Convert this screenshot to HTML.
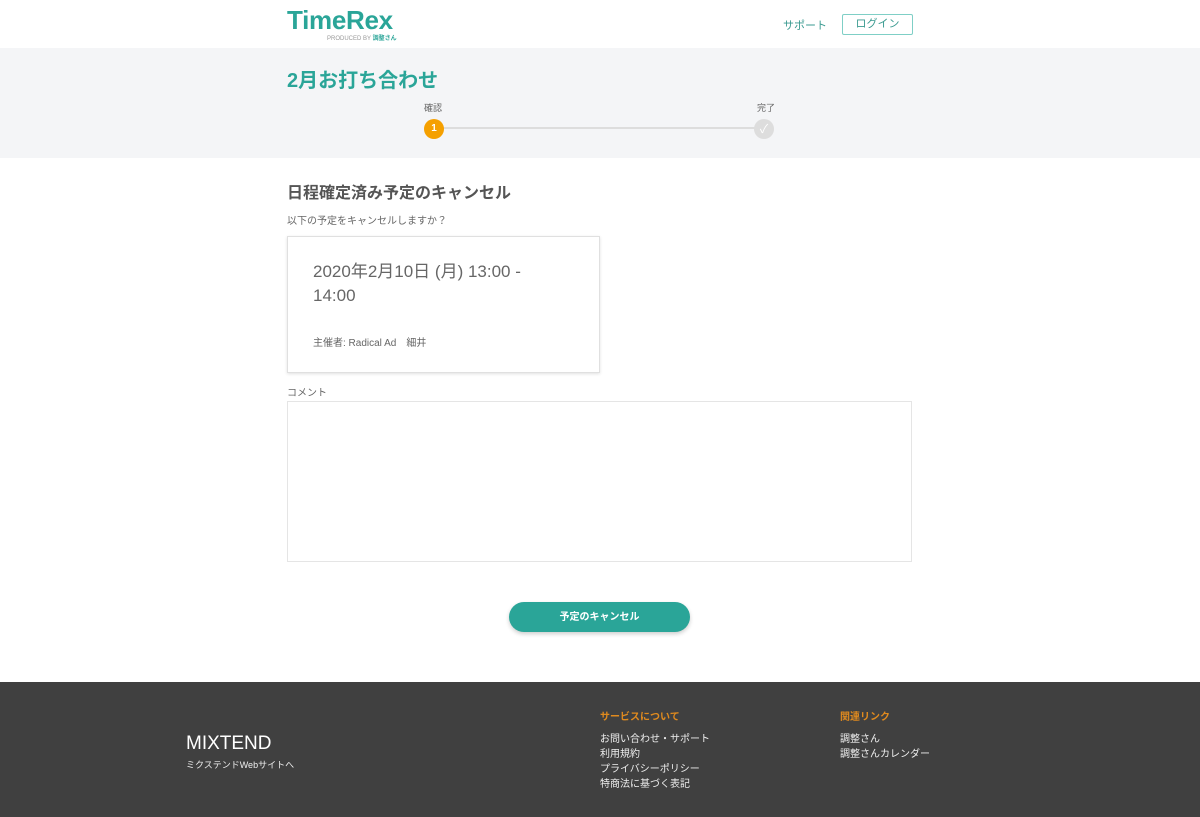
<!DOCTYPE html>
<html><head><meta charset="utf-8"><style>
*{box-sizing:border-box;margin:0;padding:0}
body{width:1200px;height:817px;overflow:hidden;background:#fff;font-family:"Liberation Sans","Noto Sans CJK JP",sans-serif;color:#555;position:relative}
.abs{position:absolute}
</style></head><body>
<div class="abs" style="left:0;top:0;width:1200px;height:48px;background:#fff"></div>
<div class="abs" style="left:287px;top:5px;font-size:26px;font-weight:bold;color:#2aa598;letter-spacing:-0.3px">TimeRex</div>
<div class="abs" style="left:327px;top:33px;font-size:6px;color:#999">PRODUCED BY <b style="color:#2aa598">調整さん</b></div>
<div class="abs" style="left:783px;top:17px;font-size:11px;color:#3a9a90">サポート</div>
<div class="abs" style="left:842px;top:14px;width:71px;height:21px;border:1.5px solid #7fcfc6;border-radius:2px;font-size:11px;color:#3a9a90;text-align:center;line-height:19px">ログイン</div>
<div class="abs" style="left:0;top:48px;width:1200px;height:110px;background:#f4f5f7"></div>
<div class="abs" style="left:287px;top:64px;font-size:20px;font-weight:bold;color:#2aa598">2月お打ち合わせ</div>
<div class="abs" style="left:424px;top:101px;font-size:9px;color:#666">確認</div>
<div class="abs" style="left:757px;top:101px;font-size:9px;color:#666">完了</div>
<div class="abs" style="left:440px;top:127px;width:325px;height:2px;background:#ddd"></div>
<div class="abs" style="left:424px;top:119px;width:20px;height:20px;border-radius:50%;background:#f5a000;color:#fff;font-size:10px;font-weight:bold;text-align:center;line-height:20px">1</div>
<div class="abs" style="left:754px;top:119px;width:20px;height:20px;border-radius:50%;background:#ddd;color:#fff;font-size:12px;text-align:center;line-height:20px">✓</div>
<div class="abs" style="left:287px;top:179px;font-size:16px;font-weight:bold;color:#555">日程確定済み予定のキャンセル</div>
<div class="abs" style="left:287px;top:212px;font-size:10px;color:#666">以下の予定をキャンセルしますか？</div>
<div class="abs" style="left:287px;top:236px;width:313px;height:137px;border:1px solid #e0e0e0;box-shadow:0 1px 3px rgba(0,0,0,.12);background:#fff"></div>
<div class="abs" style="left:313px;top:260px;width:250px;font-size:17px;color:#666;line-height:24px">2020年2月10日 (月) 13:00 - 14:00</div>
<div class="abs" style="left:313px;top:334px;font-size:10px;color:#666">主催者: Radical Ad　細井</div>
<div class="abs" style="left:287px;top:384px;font-size:10px;color:#666">コメント</div>
<div class="abs" style="left:287px;top:401px;width:625px;height:161px;border:1px solid #e5e5e5;background:#fff"></div>
<div class="abs" style="left:509px;top:602px;width:181px;height:30px;border-radius:15px;background:#2aa598;color:#fff;font-size:10px;font-weight:bold;text-align:center;line-height:31px;box-shadow:0 2px 4px rgba(0,0,0,.2)">予定のキャンセル</div>
<div class="abs" style="left:0;top:682px;width:1200px;height:135px;background:#404040"></div>
<div class="abs" style="left:186px;top:733px;font-size:19px;color:#fff">MIXTEND</div>
<div class="abs" style="left:186px;top:758px;font-size:9px;color:#eee">ミクステンドWebサイトへ</div>
<div class="abs" style="left:600px;top:708px;font-size:10px;font-weight:bold;color:#e08a1e">サービスについて</div>
<div class="abs" style="left:600px;top:732px;font-size:10px;color:#eee;line-height:15px">お問い合わせ・サポート<br>利用規約<br>プライバシーポリシー<br>特商法に基づく表記</div>
<div class="abs" style="left:840px;top:708px;font-size:10px;font-weight:bold;color:#e08a1e">関連リンク</div>
<div class="abs" style="left:840px;top:732px;font-size:10px;color:#eee;line-height:15px">調整さん<br>調整さんカレンダー</div>
</body></html>
